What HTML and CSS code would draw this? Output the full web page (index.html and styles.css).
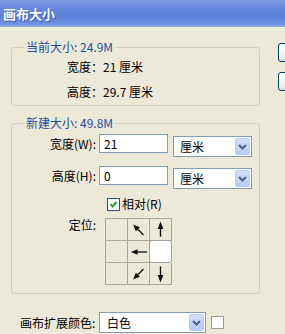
FILE: index.html
```html
<!DOCTYPE html>
<html lang="zh-CN">
<head>
<meta charset="utf-8">
<title>画布大小</title>
<link rel="stylesheet" href="styles.css">
</head>
<body>
<div class="titlebar">画布大小</div>
<div class="window-body">
  <div class="main">
    <fieldset class="group g1">
      <legend>当前大小: 24.9M</legend>
      <div class="info">宽度：21 厘米</div>
      <div class="info second">高度：29.7 厘米</div>
    </fieldset>
    <fieldset class="group g2">
      <legend>新建大小: 49.8M</legend>
      <div class="row">
        <span class="lbl">宽度(W):</span>
        <div class="input">21</div>
        <div class="select unit"><span class="val">厘米</span><span class="drop"><svg width="9" height="6" viewBox="0 0 9 6"><path d="M1 1 L4.5 4.5 L8 1" fill="none" stroke="#4d6185" stroke-width="2"/></svg></span></div>
      </div>
      <div class="row row2">
        <span class="lbl">高度(H):</span>
        <div class="input">0</div>
        <div class="select unit"><span class="val">厘米</span><span class="drop"><svg width="9" height="6" viewBox="0 0 9 6"><path d="M1 1 L4.5 4.5 L8 1" fill="none" stroke="#4d6185" stroke-width="2"/></svg></span></div>
      </div>
      <div class="check-row">
        <span class="checkbox"><svg width="11" height="11" viewBox="0 0 11 11"><path d="M2.5 5 L4.5 7.5 L8.5 3" fill="none" stroke="#21a121" stroke-width="2"/></svg></span>
        <span>相对(R)</span>
      </div>
      <div class="anchor-row">
        <span class="lbl">定位:</span>
        <div class="anchor">
          <div class="cell"></div>
          <div class="cell"><svg width="22" height="22" viewBox="0 0 22 22"><g transform="rotate(-45 11 11)"><line x1="11" y1="7" x2="11" y2="18.5" stroke="#111" stroke-width="1.4"/><polygon points="11,3 8,10 14,10" fill="#111"/></g></svg></div>
          <div class="cell"><svg width="22" height="22" viewBox="0 0 22 22"><g><line x1="11" y1="7" x2="11" y2="18" stroke="#111" stroke-width="1.4"/><polygon points="11,2 8,10 14,10" fill="#111"/></g></svg></div>
          <div class="cell"></div>
          <div class="cell"><svg width="22" height="22" viewBox="0 0 22 22"><g transform="rotate(-90 11 11)"><line x1="11" y1="7" x2="11" y2="20" stroke="#111" stroke-width="1.4"/><polygon points="11,3 8,10 14,10" fill="#111"/></g></svg></div>
          <div class="cell selected"></div>
          <div class="cell"></div>
          <div class="cell"><svg width="22" height="22" viewBox="0 0 22 22"><g transform="rotate(-135 11 11)"><line x1="11" y1="7" x2="11" y2="18.5" stroke="#111" stroke-width="1.4"/><polygon points="11,3 8,10 14,10" fill="#111"/></g></svg></div>
          <div class="cell"><svg width="22" height="22" viewBox="0 0 22 22"><g transform="rotate(180 11 11)"><line x1="11" y1="7" x2="11" y2="19" stroke="#111" stroke-width="1.4"/><polygon points="11,2 8,10 14,10" fill="#111"/></g></svg></div>
        </div>
      </div>
    </fieldset>
    <div class="ext-row">
      <span class="ext-lbl">画布扩展颜色:</span>
      <div class="select ext"><span class="val">白色</span><span class="drop"><svg width="9" height="6" viewBox="0 0 9 6"><path d="M1 1 L4.5 4.5 L8 1" fill="none" stroke="#4d6185" stroke-width="2"/></svg></span></div>
      <span class="swatch"></span>
    </div>
  </div>
  <div class="side">
    <div class="btn"></div>
    <div class="btn"></div>
  </div>
</div>
</body>
</html>
```

FILE: styles.css
```css
html, body {
  margin: 0;
  padding: 0;
}
body {
  width: 285px;
  height: 334px;
  overflow: hidden;
  background: #ece9d8;
  font-family: "Noto Sans CJK SC", "Liberation Sans", sans-serif;
  font-size: 12px;
  line-height: 14px;
  color: #000;
}
.titlebar {
  height: 27px;
  line-height: 28px;
  padding-left: 3px;
  color: #fff;
  font-weight: bold;
  font-size: 13px;
  text-shadow: 1px 1px 0 #3b5cb5;
  background: linear-gradient(to bottom, #7d9ae4 0%, #6585dc 35%, #5c7ed9 65%, #7394e2 90%, #8ba8ea 100%);
}
.window-body {
  display: flex;
  padding-top: 13px;
}
.main {
  flex: none;
  width: 249px;
  margin-left: 11px;
}
.side {
  flex: none;
  width: 7px;
  overflow: hidden;
  margin-left: 18px;
  padding-top: 3px;
  display: flex;
  flex-direction: column;
  gap: 10px;
}
.btn {
  flex: none;
  width: 75px;
  height: 19px;
  box-sizing: border-box;
  border: 1px solid #003c74;
  border-radius: 3px;
  background: linear-gradient(to bottom, #ffffff, #f0f0ea 80%, #d8d6cc);
}
.group {
  margin: 0;
  padding: 0;
  border: 1px solid #d0d0bf;
  border-radius: 3px;
  min-width: 0;
}
.group legend {
  margin-left: 12px;
  padding: 0 2px;
  color: #1f4ea0;
  line-height: 14px;
}
.g1 {
  padding: 6px 0 6px 0;
}
.info {
  margin-left: 55px;
}
.info.second {
  margin-top: 11px;
}
.g2 {
  margin-top: 10px;
  padding: 4px 0 8px 0;
}
.row {
  display: flex;
  align-items: flex-start;
  height: 23px;
}
.row2 {
  margin-top: 9px;
}
.lbl {
  width: 84px;
  flex: none;
  text-align: right;
  line-height: 19px;
}
.input {
  flex: none;
  box-sizing: border-box;
  width: 69px;
  height: 19px;
  margin-left: 3px;
  border: 1px solid #7f9db9;
  background: #fff;
  padding-left: 4px;
  line-height: 17px;
}
.select {
  flex: none;
  box-sizing: border-box;
  height: 21px;
  border: 1px solid #7f9db9;
  background: #fff;
  display: flex;
  align-items: center;
  justify-content: space-between;
  padding: 1px 1px 1px 6px;
}
.select .val {
  line-height: 17px;
}
.unit {
  width: 79px;
  margin-left: 5px;
  margin-top: 2px;
}
.drop {
  width: 15px;
  height: 17px;
  box-sizing: border-box;
  border: 1px solid #bccbf0;
  border-radius: 2px;
  background: linear-gradient(to bottom, #d2defb, #b8cbf6);
  display: flex;
  align-items: center;
  justify-content: center;
}
.check-row {
  display: flex;
  align-items: center;
  gap: 2px;
  margin-top: 8px;
  margin-left: 95px;
  height: 14px;
}
.checkbox {
  width: 13px;
  height: 13px;
  box-sizing: border-box;
  border: 1px solid #1c5180;
  background: #fff;
  display: flex;
  align-items: center;
  justify-content: center;
}
.anchor-row {
  display: flex;
  align-items: flex-start;
  margin-top: 7px;
}
.anchor-row .lbl {
  line-height: 14px;
}
.anchor {
  margin-left: 9px;
  display: grid;
  grid-template-columns: repeat(3, 22px);
  grid-auto-rows: 22px;
  border-left: 1px solid #aca899;
  border-top: 1px solid #aca899;
}
.cell {
  border-right: 1px solid #aca899;
  border-bottom: 1px solid #aca899;
  display: flex;
}
.cell.selected {
  background: #fff;
  border-radius: 3px;
  border: 1px solid #a0a0a0;
  margin: -1px 0 0 -1px;
}
.ext-row {
  display: flex;
  align-items: center;
  margin-top: 18px;
  padding-left: 9px;
}
.ext-lbl {
  flex: none;
  width: 79px;
}
.ext {
  width: 107px;
  padding-left: 7px;
}
.swatch {
  flex: none;
  width: 13px;
  height: 13px;
  box-sizing: border-box;
  margin-left: 5px;
  border: 1px solid #9a9a9a;
  background: #fff;
}
```
